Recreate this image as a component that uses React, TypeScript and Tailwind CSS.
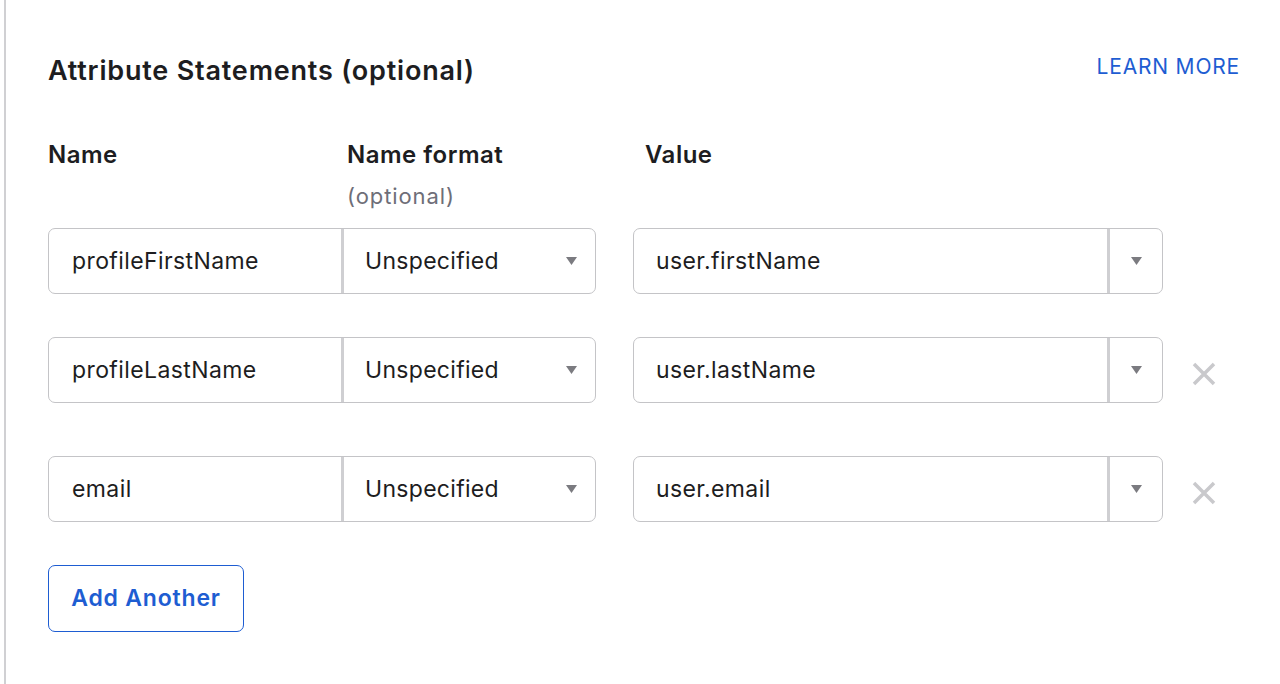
import React from 'react';

type Row = { name: string; format: string; value: string; removable: boolean };

const rows: Row[] = [
  { name: 'profileFirstName', format: 'Unspecified', value: 'user.firstName', removable: false },
  { name: 'profileLastName', format: 'Unspecified', value: 'user.lastName', removable: true },
  { name: 'email', format: 'Unspecified', value: 'user.email', removable: true },
];

const Caret = () => (
  <svg width="11" height="8" viewBox="0 0 11 8" className="shrink-0">
    <path d="M0 0 L11 0 L5.5 8 Z" fill="#7b7b80" />
  </svg>
);

const RemoveIcon = () => (
  <svg width="24" height="24" viewBox="0 0 24 24">
    <path d="M2 2 L22 22 M22 2 L2 22" stroke="#c9c9cc" strokeWidth="3.5" strokeLinecap="butt" />
  </svg>
);

export default function App() {
  return (
    <div
      className="h-[684px] w-[1280px] overflow-hidden bg-white text-[#1d1d21]"
      style={{ fontFamily: 'Inter, "Liberation Sans", sans-serif' }}
    >
      <div className="ml-[4px] h-full border-l-2 border-[#d0d0d3] pl-[42px] pr-[40px]">
        {/* Header */}
        <div className="flex items-start justify-between pt-[54px]">
          <h2 className="text-[27px] font-semibold leading-[34px] tracking-[0.8px]">
            Attribute Statements (optional)
          </h2>
          <a className="mt-[-1px] text-[21px] leading-[28px] tracking-[0.8px] text-[#1e5dd2]" href="#">
            LEARN MORE
          </a>
        </div>

        {/* Column headers */}
        <div className="mt-[52px] flex">
          <div className="w-[299px] text-[24px] font-semibold leading-[30px] tracking-[0.5px]">Name</div>
          <div className="w-[298px]">
            <div className="text-[24px] font-semibold leading-[30px] tracking-[0.5px]">Name format</div>
            <div className="mt-[11px] text-[22px] leading-[30px] tracking-[0.9px] text-[#6e6e78]">(optional)</div>
          </div>
          <div className="text-[24px] font-semibold leading-[30px] tracking-[0.5px]">Value</div>
        </div>

        {/* Rows */}
        <div className="mt-[17px] flex flex-col">
          {rows.map((r, i) => (
            <div
              key={r.name}
              className={`flex items-center ${i === 1 ? 'mt-[43px]' : i === 2 ? 'mt-[53px]' : ''}`}
            >
              <div className="flex h-[66px] w-[548px] rounded-[7px] border border-[#c4c4c7]">
                <div className="flex w-[295px] items-center border-r-[3px] border-[#cfcfd2] pl-[23px] text-[23px] tracking-[0.4px]">
                  {r.name}
                </div>
                <div className="flex flex-1 items-center justify-between pl-[21px] pr-[18px] text-[23px] tracking-[0.3px]">
                  {r.format}
                  <Caret />
                </div>
              </div>
              <div className="ml-[37px] flex h-[66px] w-[530px] rounded-[7px] border border-[#c4c4c7]">
                <div className="flex flex-1 items-center border-r-[3px] border-[#cfcfd2] pl-[22px] text-[23px] tracking-[0.4px]">
                  {r.value}
                </div>
                <div className="flex w-[52px] items-center justify-center">
                  <Caret />
                </div>
              </div>
              {r.removable && (
                <button className="ml-[29px] mt-[8px] flex items-center justify-center">
                  <RemoveIcon />
                </button>
              )}
            </div>
          ))}
        </div>

        <button className="mt-[43px] h-[67px] w-[196px] rounded-[7px] border-[1.5px] border-[#1e5dd2] text-[23px] font-semibold tracking-[0.8px] text-[#1e5dd2]">
          Add Another
        </button>
      </div>
    </div>
  );
}
